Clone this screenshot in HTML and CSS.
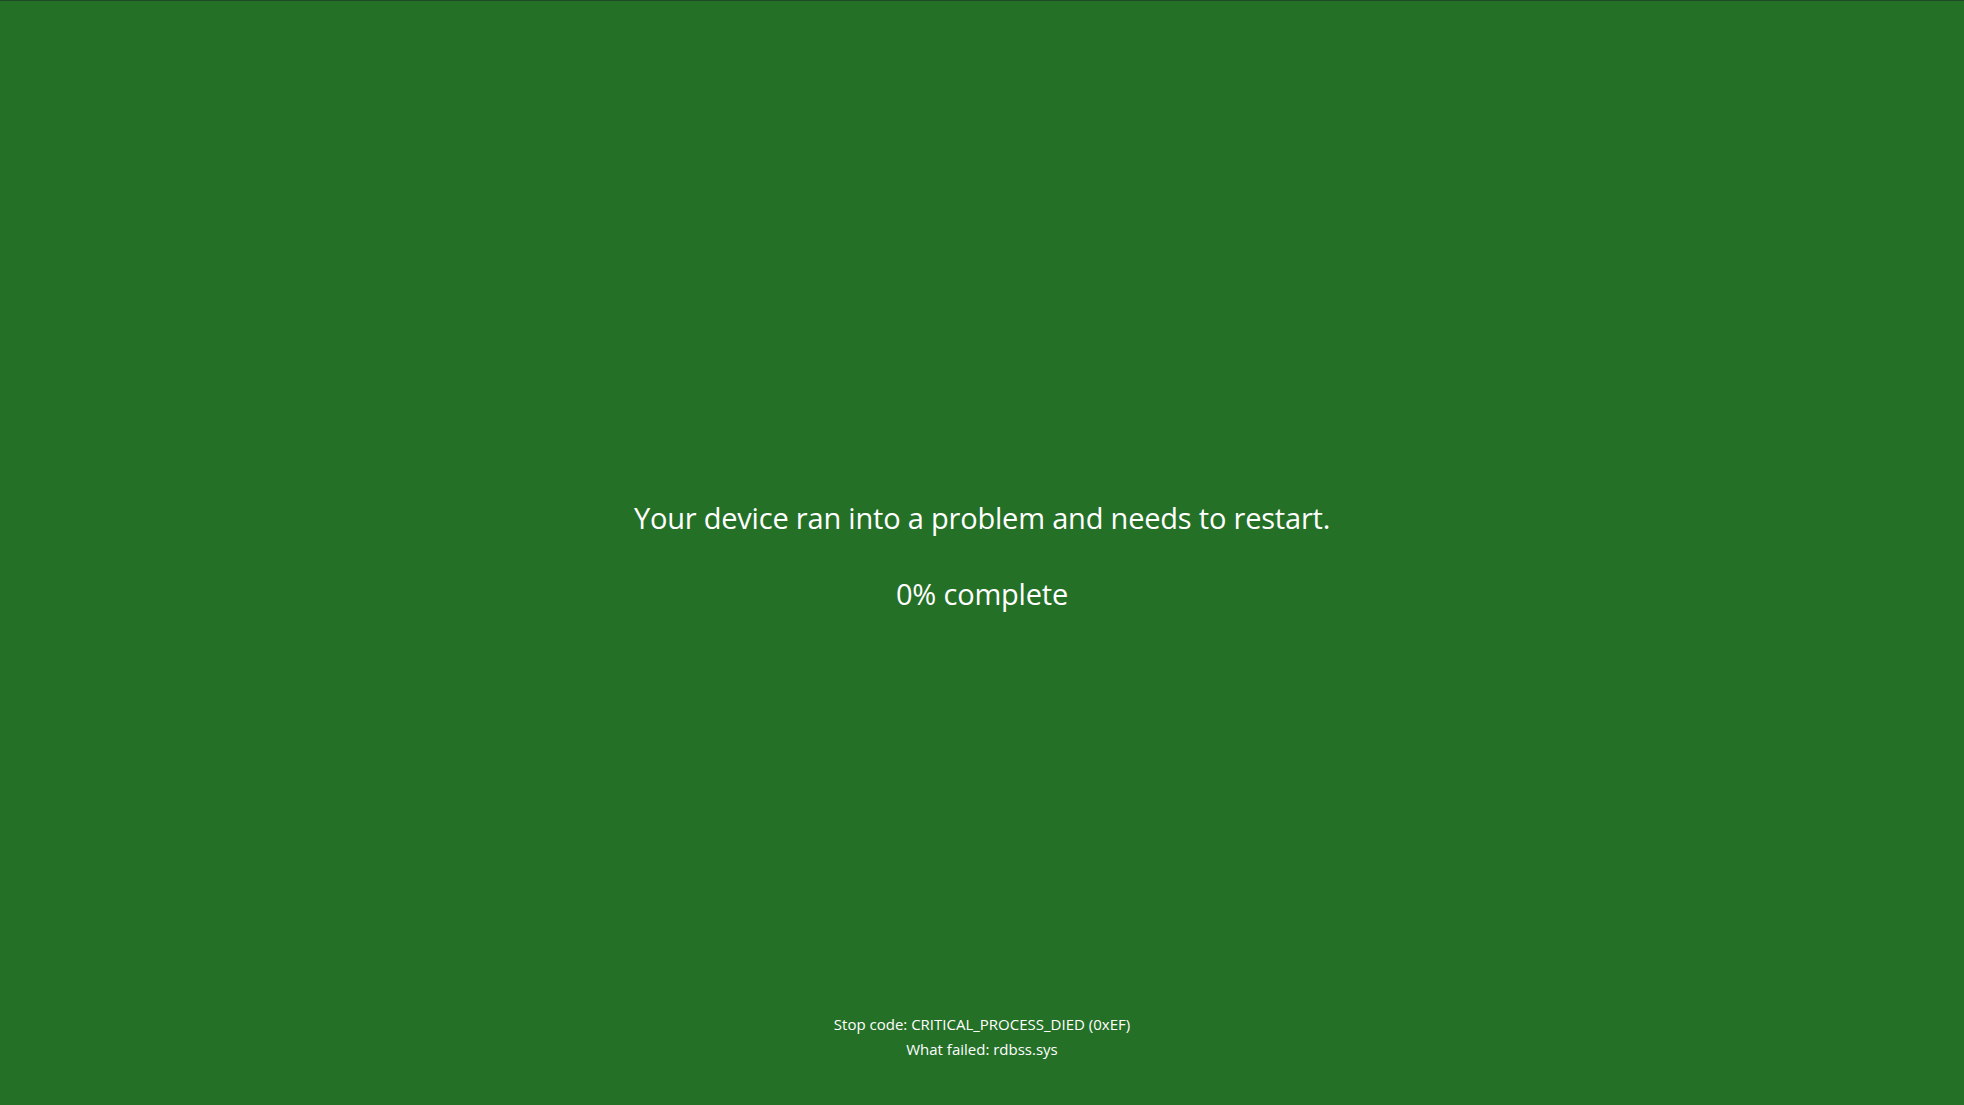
FILE: index.html
```html
<!DOCTYPE html>
<html lang="en">
<head>
<meta charset="utf-8">
<title>Restart</title>
<link rel="stylesheet" href="styles.css">
</head>
<body>
<div class="screen">
  <div class="center">
    <p class="headline">Your device ran into a problem and needs to restart.</p>
    <p class="progress">0% complete</p>
  </div>
  <div class="details">
    <p class="line">Stop code: CRITICAL_PROCESS_DIED (0xEF)</p>
    <p class="line">What failed: rdbss.sys</p>
  </div>
</div>
</body>
</html>
```
FILE: styles.css
```css
html, body {
  margin: 0;
  padding: 0;
  height: 100%;
}
body {
  background: #257027;
  color: #ffffff;
  font-family: "Open Sans", "Noto Sans", "Liberation Sans", sans-serif;
}
.screen {
  box-sizing: border-box;
  height: 1105px;
  border-top: 1px solid #1f4a25;
  display: flex;
  flex-direction: column;
  align-items: center;
}
.center {
  padding-top: 497px;
  display: flex;
  flex-direction: column;
  align-items: center;
  flex: 1;
}
.headline {
  margin: 0;
  font-size: 29px;
  line-height: 40px;
  letter-spacing: -0.2px;
}
.progress {
  margin: 36px 0 0;
  font-size: 29px;
  line-height: 40px;
  letter-spacing: -0.2px;
}
.details {
  padding-bottom: 43px;
  display: flex;
  flex-direction: column;
  align-items: center;
}
.line {
  margin: 0;
  font-size: 15px;
  line-height: 25px;
}
```
